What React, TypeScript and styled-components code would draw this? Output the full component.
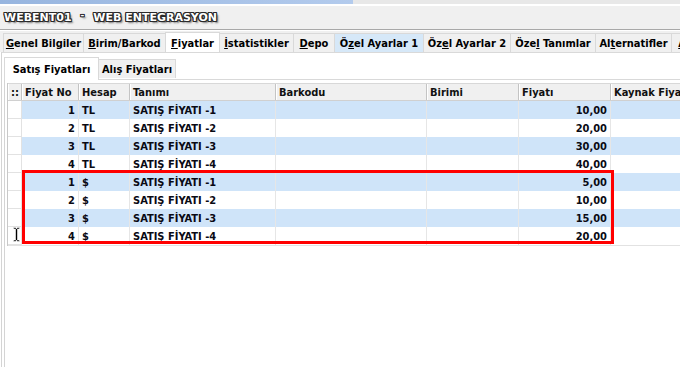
import styled, { createGlobalStyle } from "styled-components";

const GlobalStyle = createGlobalStyle`
  html, body {
    margin: 0;
    padding: 0;
    background: #ffffff;
  }
  body {
    font-family: "DejaVu Sans Condensed", "Liberation Sans", sans-serif;
    font-size: 11px;
    font-weight: bold;
    color: #000;
  }
`;

const Window = styled.div`
  position: relative;
  width: 680px;
  height: 367px;
  overflow: hidden;
  display: flex;
  flex-direction: column;
  background: #fff;
`;

const CaptionStrip = styled.div`
  height: 4px;
  background: linear-gradient(
    to right,
    #97b5df 0,
    #b3cbed 353px,
    #e8e8e8 353px,
    #e8e8e8 100%
  );
  border-bottom: 2px solid #fff;
`;

const TitleBar = styled.div`
  height: 24px;
  box-sizing: border-box;
  background: #f0f0f0;
  border-bottom: 1px solid #a8a8a8;
  display: flex;
  align-items: center;
  padding-left: 4px;
`;

const TitleText = styled.span`
  font-family: "DejaVu Sans", "Liberation Sans", sans-serif;
  font-size: 11px;
  font-weight: bold;
  color: #fff;
  white-space: pre;
  text-shadow: 1px 0 0 #2a2a2a, -1px 0 0 #2a2a2a, 0 1px 0 #2a2a2a,
    0 -1px 0 #2a2a2a, 1px 1px 0 #2a2a2a, -1px -1px 0 #2a2a2a,
    1px -1px 0 #2a2a2a, -1px 1px 0 #2a2a2a, 2px 2px 2px rgba(0, 0, 0, 0.55);
`;

const TitleDash = styled.span`
  display: inline-block;
  margin: 0 9px 0 9px;
  vertical-align: 5px;
  font-size: 9px;
`;

const TabStrip = styled.div`
  height: 21px;
  margin-top: 1px;
  background: #f0f0f0;
  display: flex;
  align-items: flex-end;
  padding-left: 3px;
  overflow: hidden;
  white-space: nowrap;
`;

const Tab = styled.div<{ $w: number; $active?: boolean; $hover?: boolean }>`
  flex: none;
  width: ${({ $w }) => $w}px;
  height: ${({ $active }) => ($active ? 21 : 19)}px;
  margin-bottom: ${({ $active }) => ($active ? -1 : 0)}px;
  margin-right: -1px;
  box-sizing: border-box;
  border: 1px solid #d9d9d9;
  border-bottom: none;
  background: ${({ $active, $hover }) =>
    $active ? "#ffffff" : $hover ? "#d6e8f8" : "#f0f0f0"};
  display: flex;
  align-items: center;
  justify-content: center;
  position: relative;
  z-index: ${({ $active }) => ($active ? 1 : 0)};
  color: #000;
`;

const TabLabel = styled.span`
  white-space: pre;
`;

const Mnemonic = styled.span`
  text-decoration: underline;
  text-underline-offset: 1px;
`;

const MainPanel = styled.div`
  flex: 1;
  margin-left: 1px;
  background: #fff;
  border-top: 1px solid #d9d9d9;
  border-left: 1px solid #d4d4d4;
  padding-left: 2px;
  display: flex;
  flex-direction: column;
`;

const SubTabStrip = styled.div`
  height: 23px;
  margin-top: 4px;
  display: flex;
  align-items: flex-start;
`;

const SubTab = styled.div<{ $w: number; $active?: boolean }>`
  flex: none;
  width: ${({ $w }) => $w}px;
  height: ${({ $active }) => ($active ? 23 : 19)}px;
  margin-top: ${({ $active }) => ($active ? 0 : 2)}px;
  margin-right: -1px;
  box-sizing: border-box;
  border: 1px solid #d9d9d9;
  border-bottom: none;
  background: ${({ $active }) => ($active ? "#ffffff" : "#f0f0f0")};
  display: flex;
  align-items: center;
  justify-content: center;
  position: relative;
  z-index: ${({ $active }) => ($active ? 1 : 0)};
`;

const SubPanel = styled.div`
  flex: 1;
  margin-top: -1px;
  border-top: 1px solid #d9d9d9;
  border-left: 1px solid #d4d4d4;
  padding: 3px 0 0 2px;
`;

const COLS = "14px 57px 51px 146px 151px 92px 92px 120px";

const Grid = styled.div`
  border-left: 1px solid #c8c8c8;
  display: flex;
  flex-direction: column;
  width: 800px;
`;

const HeaderRow = styled.div`
  display: grid;
  grid-template-columns: ${COLS};
  height: 18px;
  box-sizing: border-box;
  border-top: 1px solid #d8d8d8;
  border-bottom: 1px solid #d0d0d0;
  background: #f0f0f0;
`;

const HeaderCell = styled.div`
  box-sizing: border-box;
  border-right: 1px solid #c4c4c4;
  box-shadow: inset 1px 0 0 #ffffff;
  padding-left: 3px;
  display: flex;
  align-items: center;
  white-space: nowrap;
  overflow: hidden;
  color: #111;
`;

const Row = styled.div<{ $alt: boolean }>`
  display: grid;
  grid-template-columns: ${COLS};
  height: 18px;
  background: ${({ $alt }) => ($alt ? "#cfe4f9" : "#ffffff")};
`;

const Indicator = styled.div`
  box-sizing: border-box;
  background: #fff;
  border-right: 1px solid #e2e2e2;
  border-bottom: 1px solid #e2e2e2;
`;

const Cell = styled.div<{ $right?: boolean }>`
  box-sizing: border-box;
  border-right: 1px solid #e6e6e6;
  display: flex;
  align-items: center;
  justify-content: ${({ $right }) => ($right ? "flex-end" : "flex-start")};
  padding: 0 3px;
  white-space: nowrap;
  overflow: hidden;
  color: #0a0a14;
`;

const GridBottom = styled.div`
  height: 0;
  border-top: 1px solid #e2e2e2;
`;

const Highlight = styled.div`
  position: absolute;
  left: 22px;
  top: 170px;
  width: 592px;
  height: 74px;
  box-sizing: border-box;
  border: 3px solid #ff0000;
  pointer-events: none;
`;

const Cursor = styled.svg`
  position: absolute;
  left: 13px;
  top: 227px;
`;

const tabs = [
  { w: 81, pre: "", m: "G", post: "enel Bilgiler" },
  { w: 83, pre: "", m: "B", post: "irim/Barkod" },
  { w: 55, pre: "", m: "F", post: "iyatlar", active: true },
  { w: 75, pre: "", m: "İ", post: "statistikler" },
  { w: 42, pre: "", m: "D", post: "epo" },
  { w: 90, pre: "Ö", m: "z", post: "el Ayarlar 1", hover: true },
  { w: 88, pre: "Öz", m: "e", post: "l Ayarlar 2" },
  { w: 86, pre: "Öze", m: "l", post: " Tanımlar" },
  { w: 77, pre: "Al", m: "t", post: "ernatifler" },
  { w: 80, pre: "", m: "A", post: "çıklamalar" },
];

const rows = [
  { no: 1, hesap: "TL", tanim: "SATIŞ FİYATI -1", fiyat: "10,00" },
  { no: 2, hesap: "TL", tanim: "SATIŞ FİYATI -2", fiyat: "20,00" },
  { no: 3, hesap: "TL", tanim: "SATIŞ FİYATI -3", fiyat: "30,00" },
  { no: 4, hesap: "TL", tanim: "SATIŞ FİYATI -4", fiyat: "40,00" },
  { no: 1, hesap: "$", tanim: "SATIŞ FİYATI -1", fiyat: "5,00" },
  { no: 2, hesap: "$", tanim: "SATIŞ FİYATI -2", fiyat: "10,00" },
  { no: 3, hesap: "$", tanim: "SATIŞ FİYATI -3", fiyat: "15,00" },
  { no: 4, hesap: "$", tanim: "SATIŞ FİYATI -4", fiyat: "20,00" },
];

export default function App() {
  return (
    <>
      <GlobalStyle />
      <Window>
        <CaptionStrip />
        <TitleBar>
          <TitleText>WEBENT01</TitleText>
          <TitleText>
            <TitleDash>-</TitleDash>
          </TitleText>
          <TitleText>WEB ENTEGRASYON</TitleText>
        </TitleBar>

        <TabStrip>
          {tabs.map((t, i) => (
            <Tab key={i} $w={t.w} $active={t.active} $hover={t.hover}>
              <TabLabel>
                {t.pre}
                <Mnemonic>{t.m}</Mnemonic>
                {t.post}
              </TabLabel>
            </Tab>
          ))}
        </TabStrip>

        <MainPanel>
          <SubTabStrip>
            <SubTab $w={95} $active>
              Satış Fiyatları
            </SubTab>
            <SubTab $w={78}>Alış Fiyatları</SubTab>
          </SubTabStrip>
          <SubPanel>
            <Grid>
              <HeaderRow>
                <HeaderCell>::</HeaderCell>
                <HeaderCell>Fiyat No</HeaderCell>
                <HeaderCell>Hesap</HeaderCell>
                <HeaderCell>Tanımı</HeaderCell>
                <HeaderCell>Barkodu</HeaderCell>
                <HeaderCell>Birimi</HeaderCell>
                <HeaderCell>Fiyatı</HeaderCell>
                <HeaderCell>Kaynak Fiyatı</HeaderCell>
              </HeaderRow>
              {rows.map((r, i) => (
                <Row key={i} $alt={i % 2 === 0}>
                  <Indicator />
                  <Cell $right>{r.no}</Cell>
                  <Cell>{r.hesap}</Cell>
                  <Cell>{r.tanim}</Cell>
                  <Cell />
                  <Cell />
                  <Cell $right>{r.fiyat}</Cell>
                  <Cell />
                </Row>
              ))}
              <GridBottom />
            </Grid>
          </SubPanel>
        </MainPanel>

        <Highlight />
        <Cursor width="7" height="15" viewBox="0 0 7 15">
          <path
            d="M0.5 0.5h2.5v1h1v-1h2.5v1.5h-2v11h2v1.5h-2.5v-1h-1v1h-2.5v-1.5h2v-11h-2z"
            fill="#000"
            stroke="#fff"
            strokeWidth="0.6"
          />
        </Cursor>
      </Window>
    </>
  );
}
